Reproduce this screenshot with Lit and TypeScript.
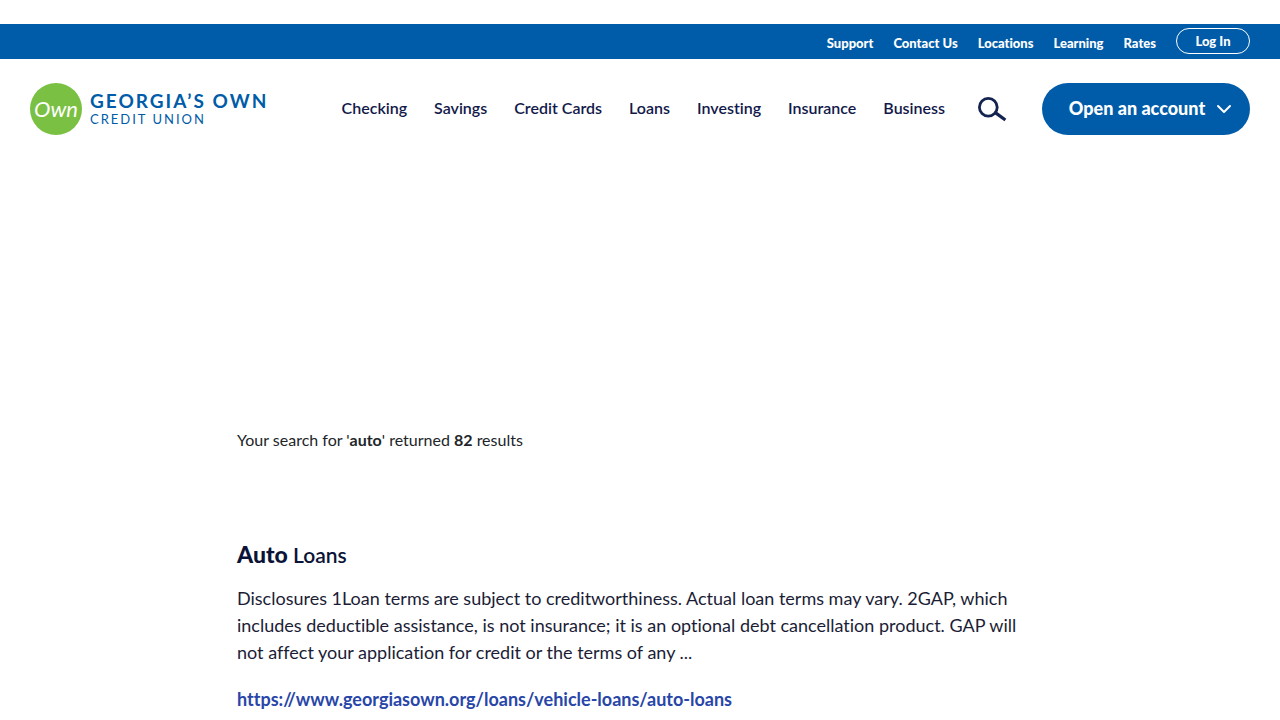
import { LitElement, html, css } from "lit";
import { customElement } from "lit/decorators.js";

const utilityLinks = ["Support", "Contact Us", "Locations", "Learning", "Rates"];
const sections = ["Checking", "Savings", "Credit Cards", "Loans", "Investing", "Insurance", "Business"];

@customElement("site-logo")
class SiteLogo extends LitElement {
  static styles = css`
    :host { display: block; flex: none; }
    .logo { display: flex; align-items: center; gap: 8px; color: #005ca8; text-decoration: none; }
    .mark { display: block; width: 52px; height: 52px; }
    .script { font: italic 400 22px "Lato", sans-serif; fill: #fff; }
    .words { display: flex; flex-direction: column; }
    .name { font-size: 19px; line-height: 20px; font-weight: 700; letter-spacing: 2px; white-space: nowrap; }
    .kind { font-size: 13px; line-height: 16px; font-weight: 400; letter-spacing: 2px; white-space: nowrap; }
  `;
  render() {
    return html`
      <a class="logo" href="#" aria-label="Georgia's Own Credit Union">
        <svg class="mark" viewBox="0 0 52 52" aria-hidden="true">
          <circle cx="26" cy="26" r="26" fill="#7ac143"></circle>
          <text class="script" x="26" y="34" text-anchor="middle">Own</text>
        </svg>
        <span class="words"><span class="name">GEORGIA’S OWN</span><span class="kind">CREDIT UNION</span></span>
      </a>
    `;
  }
}

@customElement("site-header")
class SiteHeader extends LitElement {
  static styles = css`
    :host { display: block; padding-top: 24px; }
    a { color: inherit; text-decoration: none; white-space: nowrap; }
    button { font-family: inherit; font-variant-ligatures: none; cursor: pointer; }
    .utility { display: flex; justify-content: flex-end; gap: 20px; height: 35px; padding: 0 30px; background: #005ca8; color: #fff; font-size: 13px; font-weight: 900; line-height: 38px; }
    .login { box-sizing: border-box; width: 74px; height: 26px; margin-top: 4px; border: 1px solid #fff; border-radius: 13px; line-height: 24px; text-align: center; }
    .bar { display: flex; align-items: center; justify-content: space-between; padding: 24px 30px; }
    .right { display: flex; align-items: center; }
    .nav { display: flex; gap: 27px; color: #12194a; font-size: 16px; font-weight: 600; line-height: 24px; padding-bottom: 2px; }
    .search { display: block; padding: 0; margin: 0 35px 0 32px; border: 0; background: none; }
    .glass { display: block; width: 30px; height: 26px; }
    .open { display: flex; align-items: center; justify-content: center; gap: 11px; width: 208px; height: 52px; padding: 0 0 0 9px; border: 0; border-radius: 26px; background: #005ca8; color: #fff; font-size: 18px; font-weight: 900; line-height: 24px; white-space: nowrap; }
    .label { padding-bottom: 2px; }
    .chevron { display: block; width: 16px; height: 10px; }
  `;
  render() {
    return html`
      <header>
        <nav class="utility" aria-label="Utility">
          ${utilityLinks.map((t) => html`<a href="#">${t}</a>`)}
          <a class="login" href="#">Log In</a>
        </nav>
        <div class="bar">
          <site-logo></site-logo>
          <div class="right">
            <nav class="nav" aria-label="Main">${sections.map((t) => html`<a href="#">${t}</a>`)}</nav>
            <button class="search" aria-label="Search">
              <svg class="glass" viewBox="0 0 30 26" fill="none" stroke="#14234f" aria-hidden="true">
                <circle cx="11.3" cy="11.2" r="8.9" stroke-width="2.8"></circle>
                <path d="M18.3 16.6 28.4 24" stroke-width="3.2"></path>
              </svg>
            </button>
            <button class="open"><span class="label">Open an account</span>
              <svg class="chevron" viewBox="0 0 16 10" fill="none" stroke="#fff" stroke-width="2" stroke-linecap="round" stroke-linejoin="round" aria-hidden="true"><path d="M2 2l6 6 6-6"></path></svg>
            </button>
          </div>
        </div>
      </header>
    `;
  }
}

@customElement("app-root")
class AppRoot extends LitElement {
  static styles = css`
    :host { display: block; background: #fff; font-family: "Lato", "Open Sans", sans-serif; font-variant-ligatures: none; }
    .results { max-width: 806px; margin: 0 auto; padding: 268px 24px 24px; }
    .summary { margin: 0 0 87px; color: #212529; font-size: 16px; line-height: 26px; }
    .title { margin: 0 0 16px; color: #0b1437; font-size: 21px; line-height: 28px; font-weight: 600; }
    .match { font-size: 23px; font-weight: 900; }
    .excerpt { margin: 0 0 20px; color: #1b1d36; font-size: 18px; line-height: 27px; }
    .link { color: #2846a8; font-size: 18px; line-height: 27px; font-weight: 700; text-decoration: none; }
  `;
  render() {
    return html`
      <site-header></site-header>
      <main class="results">
        <p class="summary">Your search for '<b>auto</b>' returned <b>82</b> results</p>
        <article>
          <h2 class="title"><span class="match">Auto</span> Loans</h2>
          <p class="excerpt">Disclosures 1Loan terms are subject to creditworthiness. Actual loan terms may vary. 2GAP, which includes deductible assistance, is not insurance; it is an optional debt cancellation product. GAP will not affect your application for credit or the terms of any ...</p>
          <a class="link" href="#">https://www.georgiasown.org/loans/vehicle-loans/auto-loans</a>
        </article>
      </main>
    `;
  }
}
